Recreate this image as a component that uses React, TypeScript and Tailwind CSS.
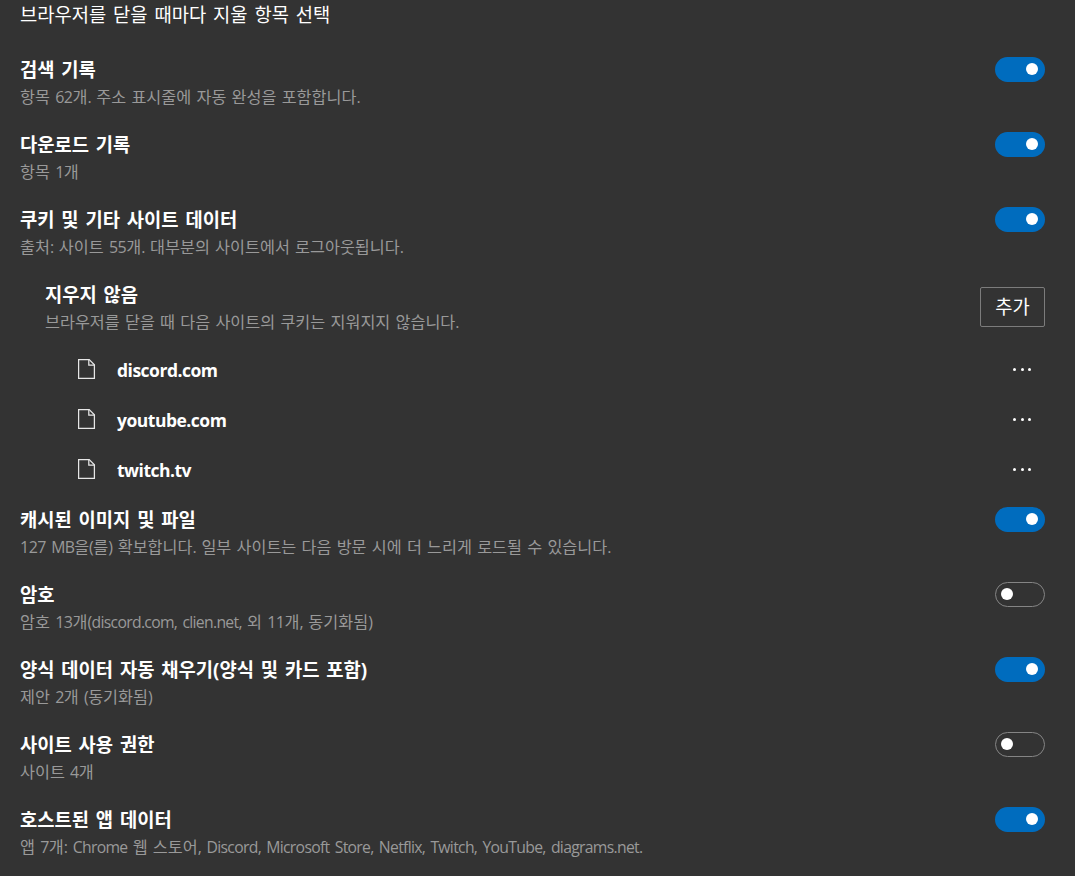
import { useState } from "react";

type Item = {
  title: string;
  detail: string;
  on: boolean;
};

const historyItems: Item[] = [
  { title: "검색 기록", detail: "항목 62개. 주소 표시줄에 자동 완성을 포함합니다.", on: true },
  { title: "다운로드 기록", detail: "항목 1개", on: true },
  {
    title: "쿠키 및 기타 사이트 데이터",
    detail: "출처: 사이트 55개. 대부분의 사이트에서 로그아웃됩니다.",
    on: true,
  },
];

const dataItems: Item[] = [
  {
    title: "캐시된 이미지 및 파일",
    detail: "127 MB을(를) 확보합니다. 일부 사이트는 다음 방문 시에 더 느리게 로드될 수 있습니다.",
    on: true,
  },
  { title: "암호", detail: "암호 13개(discord.com, clien.net, 외 11개, 동기화됨)", on: false },
  { title: "양식 데이터 자동 채우기(양식 및 카드 포함)", detail: "제안 2개 (동기화됨)", on: true },
  { title: "사이트 사용 권한", detail: "사이트 4개", on: false },
  {
    title: "호스트된 앱 데이터",
    detail: "앱 7개: Chrome 웹 스토어, Discord, Microsoft Store, Netflix, Twitch, YouTube, diagrams.net.",
    on: true,
  },
];

const sites = ["discord.com", "youtube.com", "twitch.tv"];

const Toggle = ({ initial, label }: { initial: boolean; label: string }) => {
  const [on, setOn] = useState(initial);

  return (
    <button
      role="switch"
      aria-checked={on}
      aria-label={label}
      onClick={() => setOn(!on)}
      className={
        on
          ? "flex h-[25px] w-[50px] items-start justify-end rounded-full bg-[#006cbe] px-[7px] pt-[6px]"
          : "flex h-[25px] w-[50px] items-start justify-start rounded-full border border-[#858585] px-[5px] pt-[5px]"
      }
    >
      <span className="size-3 rounded-full bg-white" />
    </button>
  );
};

// Latin letters and digits are set a little tighter than the Hangul around them
const MixedText = ({ text }: { text: string }) => (
  <>
    {text.split(/([A-Za-z][A-Za-z.,]*|[0-9.,:()]+)/).map((part, i) => {
      if (i % 2 === 0) return part;
      return (
        <span
          key={i}
          className={/[A-Za-z]/.test(part) ? "text-[15.75px] tracking-[-0.7px]" : "text-[16px] tracking-[-0.5px]"}
        >
          {part}
        </span>
      );
    })}
  </>
);

const Label = ({ title, detail }: { title: string; detail: string }) => (
  <div className="whitespace-nowrap">
    <h2 className="text-[18.75px] leading-[25px] font-bold [word-spacing:2px]">{title}</h2>
    <p className="mt-[5px] text-[16.25px] leading-5 text-[#999999] [word-spacing:1px]">
      <MixedText text={detail} />
    </p>
  </div>
);

const Row = ({ item }: { item: Item }) => (
  <div className="flex h-[75px] items-start justify-between pt-3">
    <Label title={item.title} detail={item.detail} />
    <Toggle initial={item.on} label={item.title} />
  </div>
);

const FileIcon = () => (
  <svg width="18" height="20" viewBox="0 0 18 20" fill="none" stroke="#e6e6e6" strokeWidth="1.25">
    <path d="M.6.6h10.6l5.2 5.2v13.6H.6z" />
    <path d="M10.8.8v5.4h5.4" />
  </svg>
);

const SiteRow = ({ name }: { name: string }) => (
  <div className="flex h-[50px] items-center pr-[14px] pb-[2px] pl-[58px]">
    <FileIcon />
    <span className="ml-[21px] flex-1 pt-[2px] text-[17.5px] font-bold tracking-[-0.5px]">{name}</span>
    <button aria-label={name} className="flex gap-[4.5px]">
      <span className="size-[3px] rounded-full bg-white" />
      <span className="size-[3px] rounded-full bg-white" />
      <span className="size-[3px] rounded-full bg-white" />
    </button>
  </div>
);

export default function App() {
  return (
    <div className="h-[876px] w-[1075px] overflow-hidden bg-[#333333] pr-[30px] pl-5 font-['Open_Sans','Noto_Sans_CJK_KR',sans-serif] text-white">
      <p className="h-[45px] text-[18.75px] leading-[29px] [word-spacing:2px]">
        브라우저를 닫을 때마다 지울 항목 선택
      </p>
      {historyItems.map((item) => (
        <Row key={item.title} item={item} />
      ))}
      <div className="flex h-[75px] items-start justify-between pl-[25px]">
        <div className="pt-3">
          <Label title="지우지 않음" detail="브라우저를 닫을 때 다음 사이트의 쿠키는 지워지지 않습니다." />
        </div>
        <button className="mt-[17px] h-10 w-[65px] rounded-[2px] border border-[#7c7c7c] text-[18.75px]">
          추가
        </button>
      </div>
      {sites.map((name) => (
        <SiteRow key={name} name={name} />
      ))}
      {dataItems.map((item) => (
        <Row key={item.title} item={item} />
      ))}
    </div>
  );
}
